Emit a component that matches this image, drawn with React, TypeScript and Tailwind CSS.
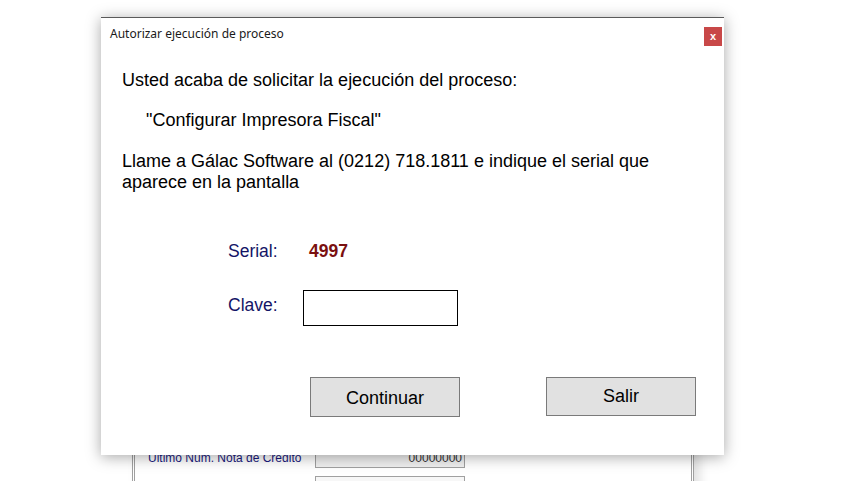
import React from "react";

const sans = { fontFamily: '"Liberation Sans", Arial, sans-serif' };

function BackWindow() {
  return (
    <div className="absolute left-[132px] top-[300px] h-[200px] w-[562px] border-x-[3px] border-double border-[#a0a0a0] bg-white shadow-[6px_0_10px_rgba(0,0,0,0.12)]">
      <div className="flex flex-col gap-[8px] pl-[13px] pt-[147px]">
        <div className="flex items-center">
          <span className="w-[167px] text-[12px] text-[#1a1a80]" style={sans}>
            Ultimo Num. Nota de Credito
          </span>
          <div className="flex h-[21px] w-[150px] items-center justify-end border border-[#a0a0a0] bg-[#f0f0f0] pr-[2px] text-[12px] text-[#333]" style={sans}>
            00000000
          </div>
        </div>
        <div className="ml-[167px] h-[21px] w-[150px] border border-[#a0a0a0] bg-[#f7f7f7]" />
      </div>
    </div>
  );
}

function Dialog() {
  return (
    <div className="absolute left-[101px] top-[17px] flex h-[438px] w-[623px] flex-col border-t border-[#5a5a5a] bg-white shadow-[0_2px_14px_rgba(0,0,0,0.35)]">
      <div className="flex h-[32px] items-center justify-between pl-[9px] pr-[2px]">
        <span className="text-[12px] text-[#1a1a1a]" style={{ fontFamily: '"Noto Sans", "Open Sans", sans-serif' }}>
          Autorizar ejecución de proceso
        </span>
        <div className="mt-[4px] flex h-[19px] w-[18px] items-center justify-center bg-[#c84848] text-[11px] font-bold leading-none text-white" style={sans}>
          x
        </div>
      </div>
      <div className="flex flex-col pl-[21px] text-[18px] text-black" style={sans}>
        <p className="mt-[20px] leading-[21px]">Usted acaba de solicitar la ejecución del proceso:</p>
        <p className="mt-[19px] pl-[24px] leading-[21px]">"Configurar Impresora Fiscal"</p>
        <p className="mt-[20px] w-[545px] leading-[21px]">
          Llame a Gálac Software al (0212) 718.1811 e indique el serial que aparece en la pantalla
        </p>
        <div className="mt-[45px] flex items-center pl-[106px] text-[17.5px]">
          <span className="w-[81px] text-[#141466]">Serial:</span>
          <span className="font-bold text-[#7a1010]">4997</span>
        </div>
        <div className="mt-[26px] flex items-start pl-[106px] text-[17.5px]">
          <span className="mt-[2px] w-[75px] text-[#141466]">Clave:</span>
          <div className="h-[36px] w-[155px] border border-black bg-white" />
        </div>
        <div className="mt-[51px] flex gap-[86px] pl-[188px]">
          <button className="h-[40px] w-[150px] border border-[#7a7a7a] bg-[#e1e1e1] pt-[2px] text-[18px] text-black">
            Continuar
          </button>
          <button className="h-[39px] w-[150px] border border-[#7a7a7a] bg-[#e1e1e1] text-[18px] text-black">
            Salir
          </button>
        </div>
      </div>
    </div>
  );
}

export default function App() {
  return (
    <div className="relative h-[481px] w-[860px] overflow-hidden bg-white">
      <BackWindow />
      <Dialog />
    </div>
  );
}
